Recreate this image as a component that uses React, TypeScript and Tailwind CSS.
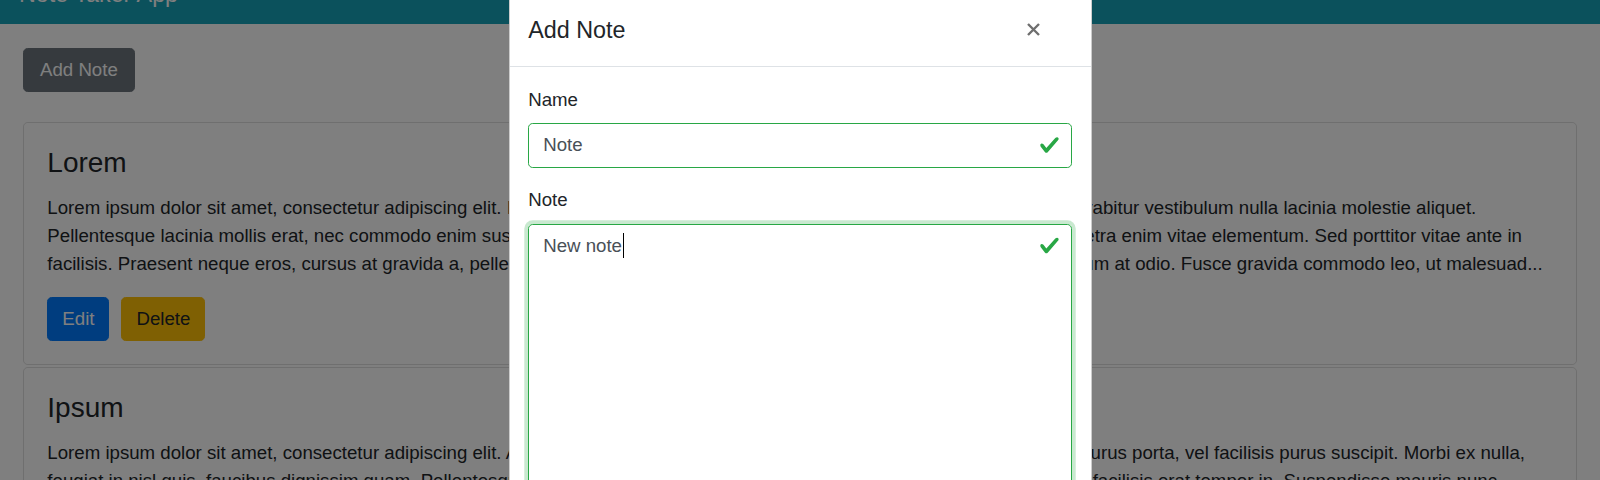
import React from 'react';

const notes = [
  {
    title: 'Lorem',
    lines: [
      'Lorem ipsum dolor sit amet, consectetur adipiscing elit. Integer eget augue sed lacus pretium tincidunt, vel sit amet nisl ac. Curabitur vestibulum nulla lacinia molestie aliquet.',
      'Pellentesque lacinia mollis erat, nec commodo enim suscipit non. Aliquam erat volutpat, nulla vel mattis finibus, lectus mi pharetra enim vitae elementum. Sed porttitor vitae ante in',
      'facilisis. Praesent neque eros, cursus at gravida a, pellentesque quis nisi. Morbi tincidunt orci non urna vehicula, sed eget dictum at odio. Fusce gravida commodo leo, ut malesuad...',
    ],
  },
  {
    title: 'Ipsum',
    lines: [
      'Lorem ipsum dolor sit amet, consectetur adipiscing elit. Aenean vel tortor non magna pulvinar rhoncus eget sed ex. Cras nec purus porta, vel facilisis purus suscipit. Morbi ex nulla,',
      'feugiat in nisl quis, faucibus dignissim quam. Pellentesque habitant morbi tristique senectus et netus et malesuada fames sed, facilisis erat tempor in. Suspendisse mauris nunc',
      'ornare vitae lorem id, tincidunt maximus augue. Nunc vel sem at mi posuere bibendum...',
    ],
  },
];

const Check = () => (
  <svg className="h-[21px] w-[21px]" viewBox="0 0 8 8">
    <path
      fill="#28a745"
      d="M2.3 6.73L.6 4.53c-.4-1.04.46-1.4 1.1-.8l1.1 1.4 3.4-3.8c.6-.63 1.6-.27 1.2.7l-4 4.6c-.43.5-.8.4-1.1.1z"
    />
  </svg>
);

export default function App() {
  return (
    <div className="relative h-[480px] w-full overflow-hidden bg-white font-['Liberation_Sans',Arial,sans-serif] text-[18.67px] leading-[28px] text-[#212529]">
      {/* Navbar (scrolled mostly out of view) */}
      <nav className="h-[24px] overflow-hidden bg-[#17a2b8] pl-[19px]">
        <div className="mt-[-17px] text-[23.33px] leading-none text-white">Note Taker App</div>
      </nav>

      <main className="px-[23px] pt-[24px]">
        <button className="h-[44px] rounded-[4.67px] border border-[#6c757d] bg-[#6c757d] px-[16px] text-white">
          Add Note
        </button>

        <div className="mt-[30px] flex flex-col gap-[2px]">
          {notes.map((n) => (
            <div key={n.title} className="rounded-[4.67px] border border-black/[.125] p-[23.33px]">
              <h4 className="mb-[14px] text-[28px] font-medium leading-[33.6px]">{n.title}</h4>
              <p className="mb-[18.67px] whitespace-nowrap">
                {n.lines.map((l, i) => (
                  <span key={i} className="block">
                    {l}
                  </span>
                ))}
              </p>
              <div className="flex gap-[12px]">
                <button className="h-[44px] rounded-[4.67px] border border-[#007bff] bg-[#007bff] px-[14px] text-white">
                  Edit
                </button>
                <button className="h-[44px] rounded-[4.67px] border border-[#ffc107] bg-[#ffc107] px-[14px] text-[#212529]">
                  Delete
                </button>
              </div>
            </div>
          ))}
        </div>
      </main>

      {/* Backdrop */}
      <div className="absolute inset-0 bg-black/50" />

      {/* Modal */}
      <div className="absolute inset-0 flex justify-center">
        <div className="mt-[-7px] w-[583px] self-start rounded-[5.6px] border border-black/20 bg-white">
          <div className="flex items-start justify-between border-b border-[#dee2e6] p-[18.67px]">
            <h5 className="text-[23.33px] font-medium leading-[35px]">Add Note</h5>
            <button className="mr-[32px] mt-[10.7px]">
              <svg className="h-[13px] w-[13px]" viewBox="0 0 13 13">
                <path d="M1 1L12 12M12 1L1 12" stroke="#6f6f6f" strokeWidth="2.4" />
              </svg>
            </button>
          </div>
          <div className="p-[18.67px]">
            <div className="mb-[18.67px]">
              <label className="mb-[9.33px] block">Name</label>
              <div className="relative flex h-[44.33px] items-center rounded-[4.67px] border border-[#28a745] px-[14px] text-[#495057]">
                Note
                <span className="absolute right-[10.5px] top-1/2 -translate-y-1/2">
                  <Check />
                </span>
              </div>
            </div>
            <div>
              <label className="mb-[9.33px] block">Note</label>
              <div className="relative h-[320px] rounded-[4.67px] border border-[#28a745] px-[14px] py-[7px] text-[#495057] shadow-[0_0_0_3.73px_rgba(40,167,69,0.25)]">
                New note
                <span className="ml-px inline-block h-[25px] w-px bg-black align-[-6px]" />
                <span className="absolute right-[10.5px] top-[10.5px]">
                  <Check />
                </span>
              </div>
            </div>
          </div>
        </div>
      </div>
    </div>
  );
}
